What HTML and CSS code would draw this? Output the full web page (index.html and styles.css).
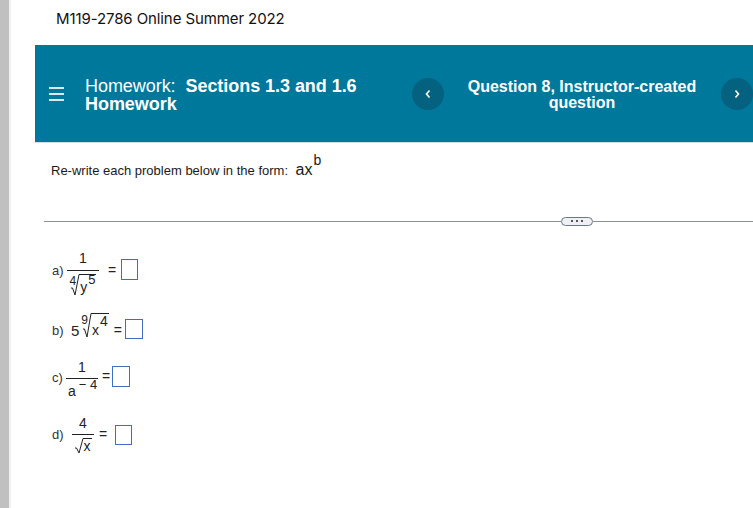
FILE: index.html
```html
<!DOCTYPE html>
<html lang="en">
<head>
  <meta charset="UTF-8">
  <title>M119-2786 Online Summer 2022</title>
  <link rel="stylesheet" href="styles.css">
</head>
<body>
  <div class="side-strip"></div>
  <main class="page">
    <div class="course-title">M119-2786 Online Summer 2022</div>

    <header class="hw-header">
      <div class="menu-icon"><span></span><span></span><span></span></div>
      <div class="hw-title">Homework:&nbsp; <b>Sections 1.3 and 1.6</b> <b>Homework</b></div>
      <button class="nav-btn">
        <svg width="8" height="10" viewBox="0 0 8 10"><path d="M5.5 1.5 2.5 5l3 3.5" fill="none" stroke="#fff" stroke-width="1.6"/></svg>
      </button>
      <div class="question-title">Question 8, Instructor-created question</div>
      <button class="nav-btn">
        <svg width="8" height="10" viewBox="0 0 8 10"><path d="M2.5 1.5 5.5 5l-3 3.5" fill="none" stroke="#fff" stroke-width="1.6"/></svg>
      </button>
    </header>

    <p class="instructions">Re-write each problem below in the form: <span class="form-expr">ax<sup>b</sup></span></p>

    <div class="divider">
      <div class="divider-line short"></div>
      <div class="divider-pill"><i></i><i></i><i></i></div>
      <div class="divider-line"></div>
    </div>

    <section class="problems">
      <div class="problem problem-a">
        <span class="label">a)</span>
        <span class="frac frac-a">
          <span class="num">1</span>
          <span class="den">
            <span class="root-index">4</span>
            <svg class="radical" width="9" height="22" viewBox="0 0 9 22"><path d="M0 14h1.5L4 21 8 .5h1" fill="none" stroke="#222" stroke-width="1"/></svg>
            <span class="radicand">y<sup>5</sup></span>
          </span>
        </span>
        <span class="equals">=</span>
        <span class="answer-box"></span>
      </div>

      <div class="problem problem-b">
        <span class="label">b)</span>
        <span class="coef">5</span>
        <span class="root-index big">9</span>
        <svg class="radical" width="9" height="25" viewBox="0 0 9 25"><path d="M0 16h1.5L4 24 8 .5h1" fill="none" stroke="#222" stroke-width="1"/></svg>
        <span class="radicand big">x<sup>4</sup></span>
        <span class="equals">=</span>
        <span class="answer-box"></span>
      </div>

      <div class="problem problem-c">
        <span class="label">c)</span>
        <span class="frac frac-c">
          <span class="num">1</span>
          <span class="den">a<sup>&minus; 4</sup></span>
        </span>
        <span class="equals">=</span>
        <span class="answer-box"></span>
      </div>

      <div class="problem problem-d">
        <span class="label">d)</span>
        <span class="frac frac-d">
          <span class="num">4</span>
          <span class="den">
            <svg class="radical" width="9" height="16" viewBox="0 0 9 16"><path d="M0 10h1.5L4 15 8 .5h1" fill="none" stroke="#222" stroke-width="1"/></svg>
            <span class="radicand">x</span>
          </span>
        </span>
        <span class="equals">=</span>
        <span class="answer-box"></span>
      </div>
    </section>
  </main>
</body>
</html>
```

FILE: styles.css
```css
html, body {
  margin: 0;
  height: 508px;
  overflow: hidden;
  background-color: white;
}
body {
  display: flex;
  font-family: "Liberation Sans", Arial, sans-serif;
  color: #222;
}
.side-strip {
  flex: 0 0 9px;
  background-color: #c0c0c0;
  border-right: 2px solid #f0f0f0;
}
.page {
  flex: 1;
  min-width: 0;
}
.course-title {
  font-family: "Inter", sans-serif;
  font-size: 15px;
  line-height: 18px;
  color: #111;
  padding: 10px 0 0 45px;
  letter-spacing: -0.1px;
}
.hw-header {
  display: flex;
  align-items: center;
  height: 97px;
  margin: 17px 0 0 24px;
  border-bottom: 1px solid #d5dde5;
  background-color: #00789c;
  color: white;
}
.menu-icon {
  display: flex;
  flex-direction: column;
  gap: 4px;
  width: 15px;
  margin: 1px 0 0 14px;
}
.menu-icon span {
  height: 2px;
  background-color: #d9e9ee;
}
.hw-title {
  width: 300px;
  margin: 2px 0 0 21px;
  font-size: 18px;
  line-height: 18px;
  letter-spacing: -0.05px;
}
.nav-btn {
  display: flex;
  align-items: center;
  justify-content: center;
  flex: 0 0 32px;
  height: 32px;
  margin-left: 27px;
  padding: 0;
  border: none;
  border-radius: 50%;
  background-color: #04617f;
}
.question-title {
  width: 240px;
  margin: 3px 0 0 18px;
  font-size: 16px;
  font-weight: bold;
  line-height: 16px;
  text-align: center;
}
.question-title + .nav-btn {
  margin-left: 19px;
}
.instructions {
  margin: 0;
  padding: 9px 0 0 40px;
  height: 45px;
  font-size: 13px;
  line-height: 36px;
  color: #1a1a1a;
}
.form-expr {
  margin-left: 4px;
  font-size: 16px;
}
.form-expr sup {
  font-size: 14px;
  vertical-align: 10px;
  line-height: 0;
  margin-left: 1px;
}
.divider {
  display: flex;
  align-items: center;
  height: 10px;
  margin: 19px 0 0 33px;
}
.divider-line {
  flex: 1;
  height: 1px;
  background-color: #8a8f98;
}
.divider-line.short {
  flex: 0 0 517px;
}
.divider-pill {
  display: flex;
  align-items: center;
  justify-content: center;
  gap: 3px;
  box-sizing: border-box;
  width: 32px;
  height: 9px;
  border: 1px solid #6b7785;
  border-radius: 5px;
  background-color: #eef0f4;
}
.divider-pill i {
  width: 2px;
  height: 2px;
  background-color: #555;
}
.problems {
  padding-left: 41px;
  font-size: 14px;
}
.problem {
  display: flex;
  align-items: center;
}
.problem-a { height: 52px; margin-top: 18px; }
.problem-b { height: 26px; margin-top: 17px; }
.problem-c { height: 44px; margin-top: 16px; }
.problem-d { height: 44px; margin-top: 13px; }
.label {
  width: 15px;
  font-size: 13px;
  color: #333;
}
.frac {
  display: inline-flex;
  flex-direction: column;
  align-items: center;
}
.num {
  line-height: 16px;
  padding-bottom: 3px;
}
.den {
  display: flex;
  justify-content: center;
  align-items: flex-start;
  width: 100%;
  padding-top: 3px;
  border-top: 1px solid #222;
}
.frac-a { width: 32px; margin-top: 5px; }
.frac-a .num { padding-bottom: 4px; }
.frac-c { width: 30px; margin-top: 3px; }
.frac-d { width: 22px; margin-left: 5px; }
.frac-c .den {
  display: block;
  padding: 4px 0 0 2px;
  line-height: 16px;
  text-align: left;
}
.frac-c sup {
  font-size: 13px;
  line-height: 0;
  vertical-align: 7px;
  margin-left: 3px;
}
.root-index {
  font-size: 12px;
  line-height: 12px;
  margin: 1px -5px 0 0;
}
.radicand {
  border-top: 1px solid #222;
  line-height: 25px;
  height: 21px;
  padding-right: 1px;
}
.radicand sup {
  font-size: 13px;
  line-height: 0;
  vertical-align: 8px;
  margin-left: 1px;
}
.frac-d .radicand {
  height: 15px;
  line-height: 15px;
  padding-right: 1px;
}
.coef {
  margin: 8px 0 0 4px;
  font-size: 15px;
}
.problem-b .radical {
  align-self: flex-start;
}
.root-index.big {
  align-self: flex-start;
  margin: 1px -5px 0 2px;
}
.radicand.big {
  align-self: flex-start;
  height: 24px;
  line-height: 32px;
}
.radicand.big sup {
  font-size: 14px;
  vertical-align: 9px;
}
.equals {
  margin-left: 9px;
}
.answer-box {
  box-sizing: border-box;
  margin-left: 5px;
  width: 17px;
  height: 21px;
  border: 1px solid #3f6fc4;
  background-color: white;
}
.problem-a .answer-box { margin-bottom: 2px; }
.problem-b .label { margin-top: 8px; }
.problem-b .equals { margin: 8px 0 0 5px; }
.problem-b .answer-box { width: 18px; height: 20px; margin: 6px 0 0 3px; }
.problem-c .equals { margin: -2px 0 0 5px; }
.problem-c .answer-box { width: 18px; margin: -1px 0 0 2px; }
.problem-d .equals { margin-left: 5px; }
.problem-d .answer-box { margin: 2px 0 0 8px; height: 20px; }
```
